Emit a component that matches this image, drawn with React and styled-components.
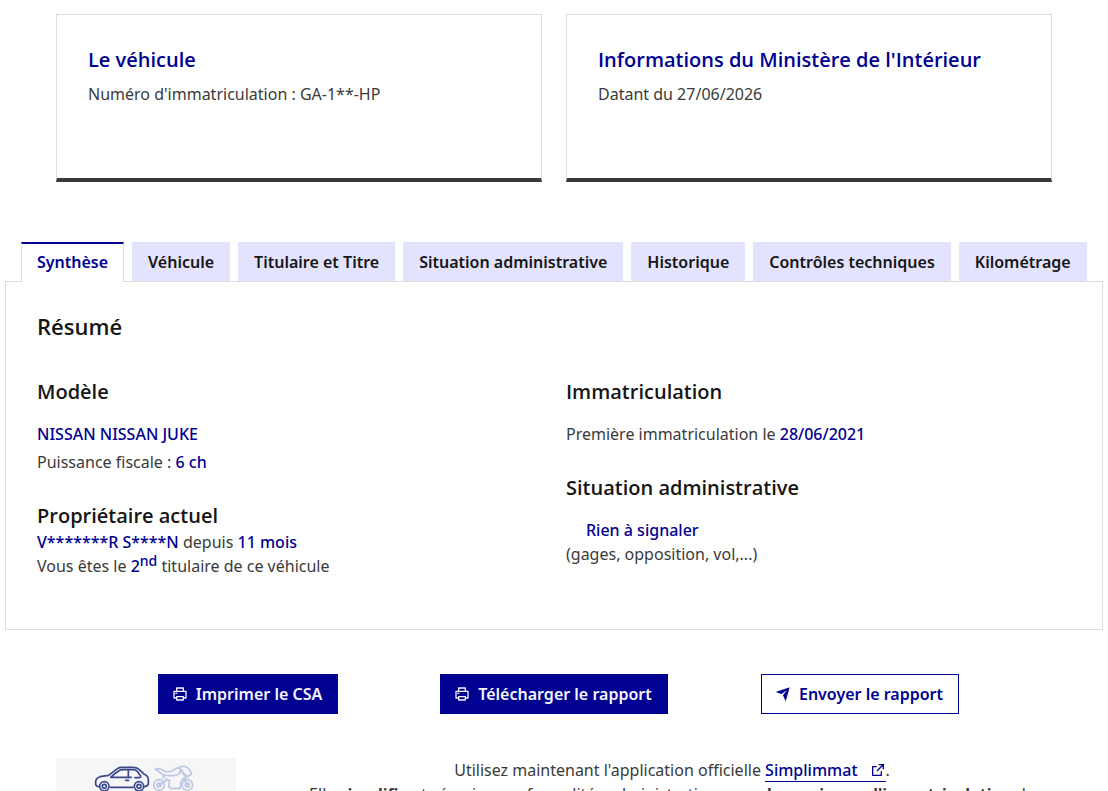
import React, { useState } from "react";
import styled, { createGlobalStyle, css } from "styled-components";
import { RiPrinterLine, RiSendPlaneFill, RiExternalLinkLine } from "react-icons/ri";

const tabs = [
  "Synthèse",
  "Véhicule",
  "Titulaire et Titre",
  "Situation administrative",
  "Historique",
  "Contrôles techniques",
  "Kilométrage"
];

// DRAWING OF THE CAR AND THE MOTORBIKE
const VehiclesDrawing = () => (
  <svg viewBox="18 24 540 300" fill="none" role="img" aria-label="Simplimmat">
    <g stroke="#3a478e" strokeWidth="5" strokeLinecap="round" strokeLinejoin="round">
      <path d="M148 111 L140 108 Q136 105 137 94 Q138 84 150 80 L176 76 L202 56 Q208 52 216 52 L248 52 Q260 52 267 58 L283 73 Q294 77 295 88 L295 101 Q294 108 284 110" />
      <path d="M181 112 H249" />
      <path d="M182 82 Q196 69 209 61 Q213 59 219 59 L246 59 Q257 59 262 64 L272 79 Q272 83 266 83 H255 M182 82 H244" />
      <path d="M235 60 V82 M227 91 H236" />
      <circle cx="163" cy="109" r="14" />
      <circle cx="163" cy="109" r="6" />
      <circle cx="267" cy="109" r="14" />
      <circle cx="267" cy="109" r="6" />
    </g>
    <g stroke="#bcc7e4" strokeWidth="5" strokeLinecap="round" strokeLinejoin="round">
      <circle cx="327" cy="105" r="16" />
      <circle cx="327" cy="105" r="6" />
      <circle cx="412" cy="105" r="16" />
      <circle cx="412" cy="105" r="6" />
      <path d="M316 58 Q324 54 333 58 L348 65 Q358 66 367 63 L378 56 Q385 51 390 56 L392 66 Q384 76 374 77 L344 76 Q334 74 328 66 Z" />
      <path d="M388 51 Q403 46 414 54 Q424 63 424 73 L414 79 L399 70 L394 59" />
      <path d="M344 76 L338 84 M347 86 L359 92 L356 110 L362 115 H390 L393 95 Q397 84 410 83 L399 71" />
      <path d="M327 105 L350 90 M402 88 L412 105" />
    </g>
  </svg>
);

const App = () => {
  const [activeTab, setActiveTab] = useState("Synthèse");

  return (
    <>
      <GlobalStyle />
      <Page>
        <Cards>
          <Card>
            <CardTitle>Le véhicule</CardTitle>
            <p>Numéro d'immatriculation : GA-1**-HP</p>
          </Card>
          <Card>
            <CardTitle>Informations du Ministère de l'Intérieur</CardTitle>
            <p>Datant du 27/06/2026</p>
          </Card>
        </Cards>

        <Report>
          <TabList role="tablist">
            {tabs.map(tab => (
              <Tab
                key={tab}
                type="button"
                role="tab"
                aria-selected={tab === activeTab}
                $active={tab === activeTab}
                onClick={() => setActiveTab(tab)}
              >
                {tab}
              </Tab>
            ))}
          </TabList>

          <Panel role="tabpanel">
            <PanelTitle>Résumé</PanelTitle>
            <Columns>
              <Column>
                <Section>
                  <SectionTitle>Modèle</SectionTitle>
                  <Lines $spaced>
                    <p>
                      <Value>NISSAN NISSAN JUKE</Value>
                    </p>
                    <p>
                      Puissance fiscale : <Value>6 ch</Value>
                    </p>
                  </Lines>
                </Section>
                <Section $tight>
                  <SectionTitle>Propriétaire actuel</SectionTitle>
                  <Lines>
                    <p>
                      <Value>V*******R S****N</Value> depuis <Value>11 mois</Value>
                    </p>
                    <p>
                      Vous êtes le{" "}
                      <Value>
                        2<sup>nd</sup>
                      </Value>{" "}
                      titulaire de ce véhicule
                    </p>
                  </Lines>
                </Section>
              </Column>

              <Column>
                <Section>
                  <SectionTitle>Immatriculation</SectionTitle>
                  <Lines>
                    <p>
                      Première immatriculation le <Value>28/06/2021</Value>
                    </p>
                  </Lines>
                </Section>
                <Section>
                  <SectionTitle>Situation administrative</SectionTitle>
                  <Lines>
                    <Status>
                      <Value>Rien à signaler</Value>
                    </Status>
                    <p>(gages, opposition, vol,...)</p>
                  </Lines>
                </Section>
              </Column>
            </Columns>
          </Panel>
        </Report>

        <Actions>
          <Button type="button">
            <RiPrinterLine />
            Imprimer le CSA
          </Button>
          <Button type="button">
            <RiPrinterLine />
            Télécharger le rapport
          </Button>
          <Button type="button" $secondary>
            <RiSendPlaneFill />
            Envoyer le rapport
          </Button>
        </Actions>

        <Promo>
          <PromoImage>
            <VehiclesDrawing />
          </PromoImage>
          <PromoText>
            Utilisez maintenant l'application officielle{" "}
            <PromoLink href="#simplimmat">
              Simplimmat
              <RiExternalLinkLine />
            </PromoLink>
            .<br />
            Elle <strong>simplifie</strong> et sécurise vos formalités
            administratives pour <strong>la cession ou l'immatriculation</strong>{" "}
            de votre véhicule.
          </PromoText>
        </Promo>
      </Page>
    </>
  );
};

export default App;

const blue = "#000091";
const grey = "#3a3a3a";
const border = "#dddddd";
const titleFont = `"Open Sans", "Noto Sans", sans-serif`;
const textFont = `"Noto Sans", "Open Sans", sans-serif`;

const GlobalStyle = createGlobalStyle`
  * {
    box-sizing: border-box;
  }

  html {
    scrollbar-width: none;
  }

  body {
    margin: 0;
    background: #fff;
    color: ${grey};
    font-family: ${textFont};
    font-size: 16px;
    line-height: 24px;
  }

  h2, h3, p {
    margin: 0;
  }

  sup {
    font-size: 14px;
    line-height: 0;
  }
`;

const Page = styled.main`
  padding: 14px 0 24px;
`;

const Cards = styled.section`
  display: grid;
  grid-template-columns: 1fr 1fr;
  gap: 24px;
  padding: 0 56px;
`;

const Card = styled.article`
  min-height: 168px;
  padding: 31px;
  border: 1px solid ${border};
  border-bottom: 4px solid ${grey};
`;

const CardTitle = styled.h3`
  margin-bottom: 8px;
  color: ${blue};
  font-family: ${titleFont};
  font-size: 20px;
  font-weight: 600;
  line-height: 28px;
`;

const Report = styled.section`
  margin: 60px 5px 0;
`;

const TabList = styled.div`
  display: flex;
  gap: 8px;
  padding: 0 16px;
`;

const Tab = styled.button`
  height: 39px;
  padding: 0 16px;
  border: 0;
  background: #e3e3fd;
  color: #161616;
  font-family: ${textFont};
  font-size: 16px;
  font-weight: 600;
  line-height: 24px;
  white-space: nowrap;
  cursor: pointer;

  ${props =>
    props.$active &&
    css`
      height: 40px;
      margin-bottom: -1px;
      padding: 0 15px 2px;
      border: 1px solid ${border};
      border-top: 2px solid ${blue};
      border-bottom: 0;
      background: #fff;
      color: ${blue};
      z-index: 1;
    `}
`;

const Panel = styled.div`
  padding: 30px 31px 51px;
  border: 1px solid ${border};
`;

const PanelTitle = styled.h2`
  margin-bottom: 38px;
  color: #161616;
  font-family: ${titleFont};
  font-size: 22px;
  font-weight: 600;
  line-height: 28px;
`;

const Columns = styled.div`
  display: grid;
  grid-template-columns: 1fr 1fr;
  gap: 24px;
`;

const Column = styled.div`
  display: flex;
  flex-direction: column;
  gap: 28px;
`;

const Section = styled.section`
  display: flex;
  flex-direction: column;
  gap: ${props => (props.$tight ? "0" : "16px")};
`;

const SectionTitle = styled.h3`
  color: #161616;
  font-family: ${titleFont};
  font-size: 20px;
  font-weight: 600;
  line-height: 28px;
`;

const Lines = styled.div`
  display: flex;
  flex-direction: column;
  gap: ${props => (props.$spaced ? "4px" : "0")};
`;

const Value = styled.span`
  color: ${blue};
  font-weight: 500;
`;

const Status = styled.p`
  padding-left: 20px;
`;

const Actions = styled.section`
  display: grid;
  grid-template-columns: repeat(3, 1fr);
  justify-items: center;
  margin-top: 44px;
  padding: 0 95px;
`;

const Button = styled.button`
  display: inline-flex;
  align-items: center;
  gap: 8px;
  height: 40px;
  padding: 0 15px 0 13px;
  border: 1px solid ${blue};
  background: ${props => (props.$secondary ? "#fff" : blue)};
  color: ${props => (props.$secondary ? blue : "#f5f5fe")};
  font-family: ${textFont};
  font-size: 16px;
  font-weight: 600;
  line-height: 24px;
  white-space: nowrap;
  cursor: pointer;
`;

const Promo = styled.section`
  display: flex;
  gap: 56px;
  margin-top: 44px;
  padding: 0 56px;
`;

const PromoImage = styled.div`
  flex: 0 0 180px;
  background: #f6f6f6;

  svg {
    display: block;
    width: 100%;
  }
`;

const PromoText = styled.p`
  flex: 1;
  text-align: center;
`;

const PromoLink = styled.a`
  border-bottom: 1px solid ${blue};
  color: ${blue};
  font-weight: 500;
  text-decoration: none;

  svg {
    margin-left: 12px;
    vertical-align: -2px;
  }
`;
